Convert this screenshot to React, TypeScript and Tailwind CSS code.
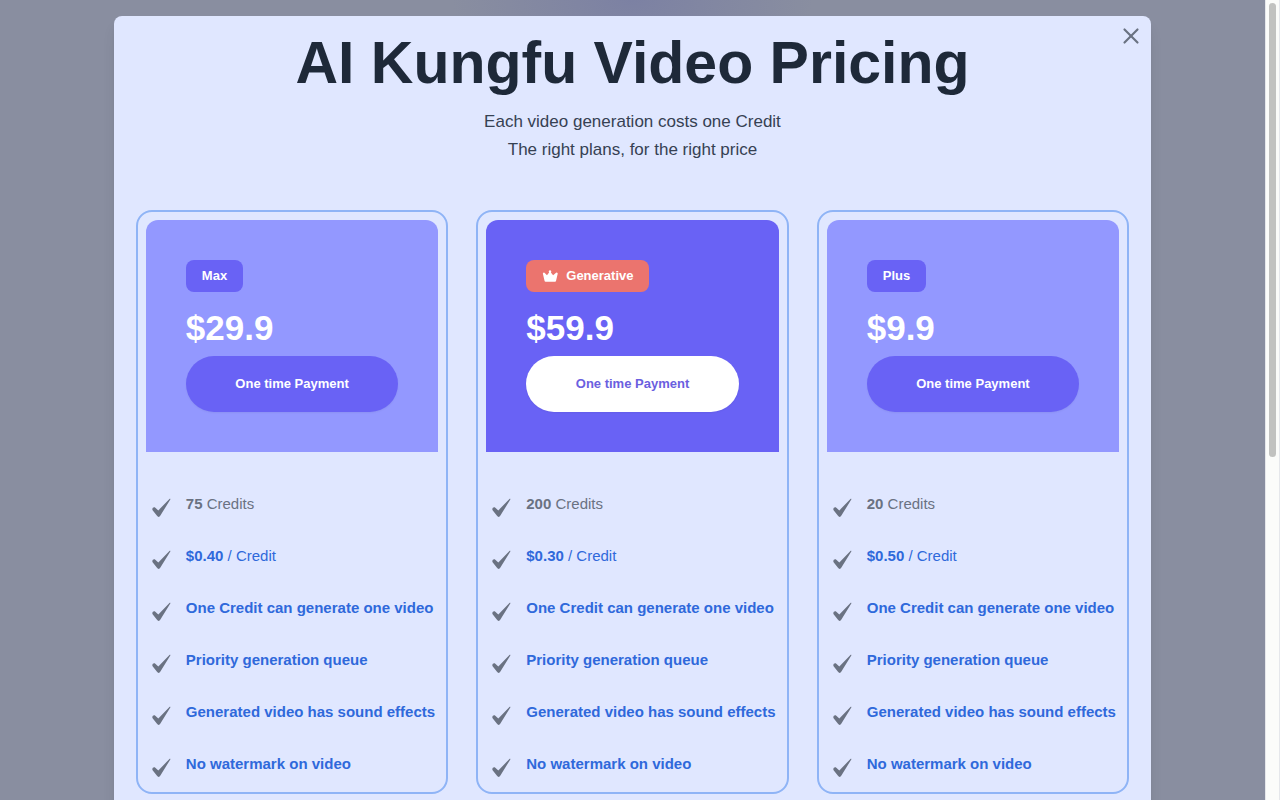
import { X } from "lucide-react";

type Plan = {
  name: string;
  price: string;
  credits: number;
  perCredit: string;
  featured?: boolean;
};

const PLANS: Plan[] = [
  { name: "Max", price: "$29.9", credits: 75, perCredit: "$0.40" },
  { name: "Generative", price: "$59.9", credits: 200, perCredit: "$0.30", featured: true },
  { name: "Plus", price: "$9.9", credits: 20, perCredit: "$0.50" },
];

const FEATURES = [
  "One Credit can generate one video",
  "Priority generation queue",
  "Generated video has sound effects",
  "No watermark on video",
];

function CheckMark() {
  return (
    <svg viewBox="0 0 20 20" className="mt-1.5 h-5 w-5 shrink-0 fill-gray-500" aria-hidden="true">
      <path d="M17.700.800c.4-.3.9 0 .6.600L8.400 17.600c-.9 1.700-2.500 1.700-3.400.2L.600 12.200c-1-1.700.9-3.600 2.700-2.500l3 2.700z" />
    </svg>
  );
}

function Crown() {
  return (
    <svg viewBox="0 0 16 12" className="h-3 w-4 fill-white" aria-hidden="true">
      <path d="M8 .2a1.300 1.300 0 0 1 .9 2.200l2.200 2.800 3-2.400a1 1 0 0 1 1.600 1L14 11a1 1 0 0 1-1 .8H3.600a1 1 0 0 1-1-.8L.9 3.800a1 1 0 0 1 1.600-1l2.500 2.400 2.100-2.800A1.300 1.300 0 0 1 8 .2z" />
    </svg>
  );
}

function PlanCard({ plan }: { plan: Plan }) {
  return (
    <section className="min-w-0 flex-1 rounded-2xl border-2 border-[#8fb4f6] p-2 pb-3">
      <div
        className={
          plan.featured
            ? "rounded-t-xl bg-[#6962f5] p-10"
            : "rounded-t-xl bg-[#9398ff] p-10"
        }
      >
        <h2
          className={
            plan.featured
              ? "inline-flex h-8 items-center gap-2 rounded-lg bg-[#eb746e] px-4 text-[13px] font-bold text-white"
              : "inline-flex h-8 items-center rounded-lg bg-[#6962f5] px-4 text-[13px] font-bold text-white"
          }
        >
          {plan.featured && <Crown />}
          {plan.name}
        </h2>
        <p className="mt-4 text-[35px] leading-10 font-bold text-white">{plan.price}</p>
        <button
          type="button"
          className={
            plan.featured
              ? "mt-2 h-14 w-full rounded-full bg-white text-[13px] font-bold text-[#6b5fe0] shadow-xs"
              : "mt-2 h-14 w-full rounded-full bg-[#6962f5] text-[13px] font-bold text-white shadow-xs"
          }
        >
          One time Payment
        </button>
      </div>

      <ul className="space-y-6 pt-10 pl-1.5 text-[15px] whitespace-nowrap">
        <li className="flex h-7 gap-3.5 text-gray-500">
          <CheckMark />
          <span className="leading-6">
            <b>{plan.credits}</b> Credits
          </span>
        </li>
        <li className="flex h-7 gap-3.5 text-[#2f69db]">
          <CheckMark />
          <span className="leading-6">
            <b>{plan.perCredit}</b> / Credit
          </span>
        </li>
        {FEATURES.map((feature) => (
          <li key={feature} className="flex h-7 gap-3.5 text-[#2f69db]">
            <CheckMark />
            <b className="leading-6">{feature}</b>
          </li>
        ))}
      </ul>
    </section>
  );
}

export default function App() {
  return (
    <div className="flex h-screen overflow-hidden bg-[#898ea0] font-['Liberation_Sans',Arial,sans-serif]">
      <div className="min-w-0 flex-1 overflow-hidden bg-[radial-gradient(ellipse_180px_90px_at_50%_0,#7c81a3,#898ea0)] pt-4">
        <main
          role="dialog"
          aria-labelledby="pricing-title"
          className="relative mx-auto min-h-full w-[82%] rounded-lg bg-[#e0e7ff] px-[22px] pt-4 pb-10 shadow-lg"
        >
          <button type="button" aria-label="Close" className="absolute top-[7px] right-[7px] text-gray-500">
            <X size={26} strokeWidth={2} />
          </button>
          <header className="text-center">
            <h1 id="pricing-title" className="text-[59px] leading-[62px] font-bold text-gray-800">
              AI Kungfu Video Pricing
            </h1>
            <p className="mt-3.5 text-[17px] leading-7 text-gray-700">
              Each video generation costs one Credit
              <br />
              The right plans, for the right price
            </p>
          </header>
          <div className="mt-[46px] flex gap-7">
            {PLANS.map((plan) => (
              <PlanCard key={plan.name} plan={plan} />
            ))}
          </div>
        </main>
      </div>
      <div className="w-[15px] shrink-0 border-x border-gray-200 bg-[#fbfcfa] px-[3px] pt-[3px]" aria-hidden="true">
        <div className="h-[57%] rounded-full bg-[#c1c2c0]" />
      </div>
    </div>
  );
}
